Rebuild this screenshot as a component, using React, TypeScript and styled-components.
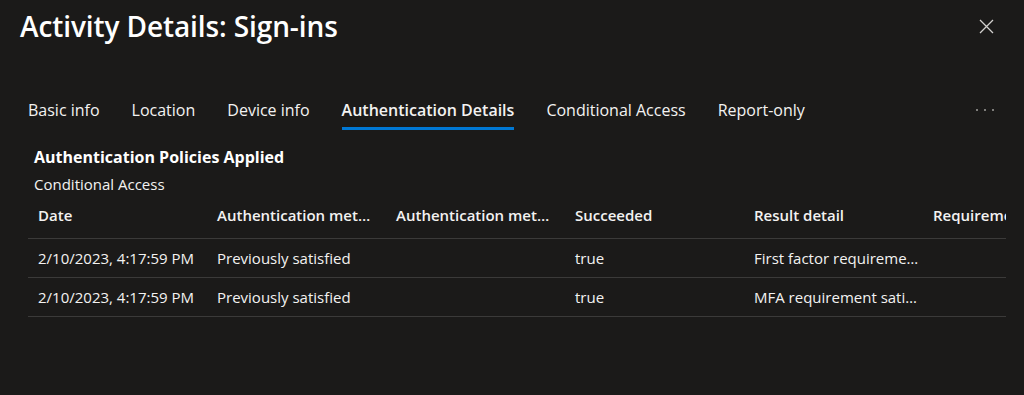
import styled, { createGlobalStyle } from 'styled-components';

const GlobalStyle = createGlobalStyle`
  html, body {
    margin: 0;
    padding: 0;
    background: #1b1a19;
  }
  body {
    font-family: "Open Sans", "Noto Sans", sans-serif;
    color: #f3f2f1;
  }
`;

const Panel = styled.div`
  width: 1024px;
  height: 395px;
  box-sizing: border-box;
  background: #1b1a19;
  overflow: hidden;
`;

const Header = styled.div`
  display: flex;
  align-items: center;
  justify-content: space-between;
  padding: 6px 30px 0 20px;
  height: 40px;
`;

const Title = styled.h1`
  margin: 0;
  font-size: 28px;
  font-weight: 600;
  color: #ffffff;
  letter-spacing: -0.1px;
`;

const CloseButton = styled.button`
  background: none;
  border: none;
  padding: 0;
  width: 16px;
  height: 16px;
  display: flex;
  align-items: center;
  justify-content: center;
  color: #d2d0ce;
`;

const TabBar = styled.div`
  display: flex;
  align-items: flex-start;
  justify-content: space-between;
  padding: 53px 30px 0 28px;
`;

const TabList = styled.div`
  display: flex;
  gap: 32px;
`;

const Tab = styled.div<{ $active?: boolean }>`
  font-size: 16px;
  font-weight: ${({ $active }) => ($active ? 600 : 400)};
  color: #f3f2f1;
  padding-bottom: 6px;
  border-bottom: 3px solid ${({ $active }) => ($active ? '#0078d4' : 'transparent')};
  line-height: 22px;
`;

const MoreDots = styled.div`
  display: flex;
  gap: 6px;
  padding-top: 10px;
  span {
    width: 2px;
    height: 2px;
    border-radius: 50%;
    background: #a19f9d;
  }
`;

const Section = styled.div`
  padding: 16px 18px 0 28px;
`;

const SectionTitle = styled.div`
  font-size: 16px;
  font-weight: 700;
  color: #ffffff;
  padding-left: 6px;
  line-height: 22px;
`;

const SectionSub = styled.div`
  font-size: 15px;
  color: #f3f2f1;
  padding-left: 6px;
  margin-top: 6px;
  line-height: 20px;
`;

const TableWrap = styled.div`
  overflow: hidden;
  width: 978px;
`;

const Table = styled.div`
  display: grid;
  grid-template-columns: repeat(6, 179px);
  width: max-content;
`;

const Row = styled.div`
  display: contents;
`;

const Cell = styled.div<{ $head?: boolean }>`
  height: ${({ $head }) => ($head ? '44px' : '38px')};
  line-height: ${({ $head }) => ($head ? '42px' : '38px')};
  padding: 0 ${({ $head }) => ($head ? '12px' : '4px')} 0 10px;
  font-size: 15px;
  font-weight: ${({ $head }) => ($head ? 600 : 400)};
  color: #f3f2f1;
  border-bottom: 1px solid #3b3a39;
  white-space: nowrap;
  overflow: hidden;
  text-overflow: ellipsis;
`;

const columns = [
  'Date',
  'Authentication method',
  'Authentication method detail',
  'Succeeded',
  'Result detail',
  'Requirement',
];

const rows = [
  ['2/10/2023, 4:17:59 PM', 'Previously satisfied', '', 'true', 'First factor requirement satisfied by claim in the token', ''],
  ['2/10/2023, 4:17:59 PM', 'Previously satisfied', '', 'true', 'MFA requirement satisfied by claim in the token', ''],
];

const tabs = ['Basic info', 'Location', 'Device info', 'Authentication Details', 'Conditional Access', 'Report-only'];

export default function App() {
  return (
    <Panel>
      <GlobalStyle />
      <Header>
        <Title>Activity Details: Sign-ins</Title>
        <CloseButton aria-label="Close">
          <svg width="15" height="15" viewBox="0 0 15 15">
            <path d="M1 1 L14 14 M14 1 L1 14" stroke="currentColor" strokeWidth="1.3" />
          </svg>
        </CloseButton>
      </Header>
      <TabBar>
        <TabList>
          {tabs.map((t) => (
            <Tab key={t} $active={t === 'Authentication Details'}>
              {t}
            </Tab>
          ))}
        </TabList>
        <MoreDots>
          <span />
          <span />
          <span />
        </MoreDots>
      </TabBar>
      <Section>
        <SectionTitle>Authentication Policies Applied</SectionTitle>
        <SectionSub>Conditional Access</SectionSub>
        <TableWrap>
          <Table>
            <Row>
              {columns.map((c) => (
                <Cell key={c} $head>
                  {c}
                </Cell>
              ))}
            </Row>
            {rows.map((r, i) => (
              <Row key={i}>
                {r.map((v, j) => (
                  <Cell key={j}>{v}</Cell>
                ))}
              </Row>
            ))}
          </Table>
        </TableWrap>
      </Section>
    </Panel>
  );
}
